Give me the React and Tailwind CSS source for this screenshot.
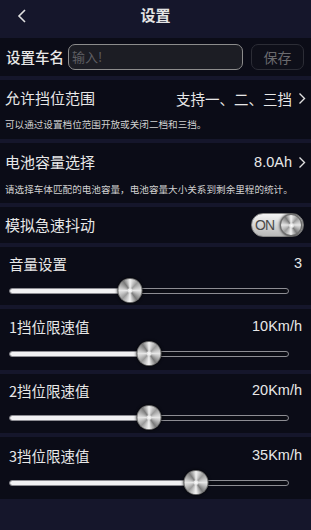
import React from 'react';

const sliders = [
  { label: '音量设置', value: '3', pct: 43.2, h: 'h-[58px]', top: 'pt-[7px]' },
  { label: '1挡位限速值', value: '10Km/h', pct: 50, h: 'h-[61px]', top: 'pt-[8px]' },
  { label: '2挡位限速值', value: '20Km/h', pct: 50, h: 'h-[59px]', top: 'pt-[7px]' },
  { label: '3挡位限速值', value: '35Km/h', pct: 66.8, h: 'h-[62px]', top: 'pt-[9px]' },
];

function Chevron() {
  return (
    <svg width="8" height="13" viewBox="0 0 8 13" className="ml-[6px]">
      <path d="M1.5 1.5 L6.5 6.5 L1.5 11.5" fill="none" stroke="#e0e0e0" strokeWidth="1.4" />
    </svg>
  );
}

function Knob({ size }) {
  return (
    <div className={`${size} rounded-full p-[1px] bg-[#6f6f6f] shadow-[0_0_3px_rgba(0,0,0,0.9)]`}>
      <div className="w-full h-full rounded-full bg-[conic-gradient(#f2f2f2,#9a9a9a_12%,#e6e6e6_25%,#7a7a7a_40%,#f4f4f4_50%,#9a9a9a_62%,#e6e6e6_75%,#7a7a7a_90%,#f2f2f2)] flex items-center justify-center">
        <div className="w-[5px] h-[5px] rounded-full bg-[radial-gradient(#ffffff,#cfcfcf)]" />
      </div>
    </div>
  );
}

function Slider({ pct }) {
  return (
    <div className="relative w-[280px] h-[25px] flex items-center">
      <div className="w-full h-[6px] rounded-[3px] border border-[#8d8d93] bg-[#0b0c14] overflow-hidden flex">
        <div className="h-full bg-[#f1f1f3] border-r border-[#999]" style={{ width: `${pct}%` }} />
      </div>
      <div className="absolute top-0 -translate-x-1/2" style={{ left: `${pct}%` }}>
        <Knob size="w-[25px] h-[25px]" />
      </div>
    </div>
  );
}

export default function App() {
  return (
    <div className="w-[311px] h-[530px] bg-[#15162b] text-[#e8e8e8] font-['Noto_Sans_CJK_SC',sans-serif] overflow-hidden">
      {/* header */}
      <div className="h-[38px] flex items-center relative">
        <svg width="10" height="14" viewBox="0 0 10 14" className="absolute left-[17px] top-[9px]">
          <path d="M8 1 L2 7 L8 13" fill="none" stroke="#e0e0e0" strokeWidth="1.6" />
        </svg>
        <div className="w-full text-center text-[15px] font-bold -mt-[8px] text-[#e4e4e4]">设置</div>
      </div>

      {/* name row */}
      <div className="h-[38px] bg-[#0b0c17] flex items-center pl-[6px]">
        <div className="text-[14.5px] font-medium w-[62px] whitespace-nowrap">设置车名</div>
        <div className="w-[175px] h-[26px] border border-[#8c8c8c] rounded-[7px] bg-[#1c1d24] flex items-center pl-[3px] text-[13px] text-[#5f5f63]">
          输入!
        </div>
        <div className="ml-[8px] w-[53px] h-[26px] border border-[#2c2d36] rounded-[7px] bg-[#0e0f19] flex items-center justify-center text-[14px] text-[#6a6a6e]">
          保存
        </div>
      </div>

      <div className="h-[4px]" />

      {/* gear range */}
      <div className="h-[59px] bg-[#0b0c17] px-[5px]">
        <div className="h-[37px] flex items-center justify-between">
          <span className="text-[15px]">允许挡位范围</span>
          <span className="flex items-center text-[14.5px]">
            支持一、二、三挡
            <Chevron />
          </span>
        </div>
        <div className="text-[9.6px] leading-[14px] text-[#d0d0d0] whitespace-nowrap">可以通过设置档位范围开放或关闭二档和三挡。</div>
      </div>

      <div className="h-[4px]" />

      {/* battery */}
      <div className="h-[60px] bg-[#0b0c17] px-[5px]">
        <div className="h-[39px] flex items-center justify-between">
          <span className="text-[15px]">电池容量选择</span>
          <span className="flex items-center text-[14.5px] font-['Liberation_Sans',sans-serif]">
            8.0Ah
            <Chevron />
          </span>
        </div>
        <div className="text-[9.6px] leading-[14px] text-[#d0d0d0] whitespace-nowrap">请选择车体匹配的电池容量，电池容量大小关系到剩余里程的统计。</div>
      </div>

      <div className="h-[4px]" />

      {/* vibration */}
      <div className="h-[36px] bg-[#0b0c17] flex items-center justify-between pl-[5px] pr-[7px]">
        <span className="text-[15px]">模拟急速抖动</span>
        <div className="w-[53px] h-[24px] rounded-full bg-[linear-gradient(#f4f4f4,#b8b8b8)] border border-[#888] flex items-center justify-between pl-[3px] pr-[1px]">
          <span className="text-[14px] text-[#4a4a4a] font-['Liberation_Sans',sans-serif] tracking-[-0.8px]">ON</span>
          <Knob size="w-[22px] h-[22px]" />
        </div>
      </div>

      {sliders.map((s) => (
        <div key={s.label}>
          <div className="h-[4px]" />
          <div className={`${s.h} ${s.top} bg-[#0b0c17] pl-[9px] pr-[9px]`}>
            <div className="flex items-center justify-between h-[20px]">
              <span className="text-[14.5px]">{s.label}</span>
              <span className="text-[14.5px] font-['Liberation_Sans',sans-serif]">{s.value}</span>
            </div>
            <div className="mt-[4px]">
              <Slider pct={s.pct} />
            </div>
          </div>
        </div>
      ))}
    </div>
  );
}
